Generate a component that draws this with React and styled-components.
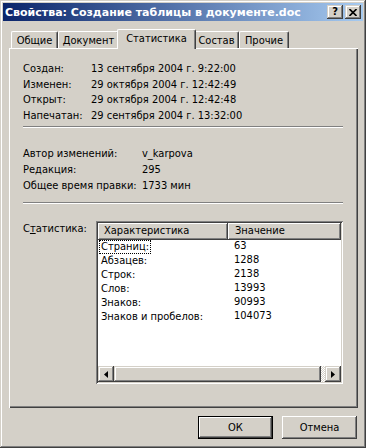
import React from 'react';
import styled, { createGlobalStyle } from 'styled-components';

const FACE = '#D4D0C8';
const SHADOW = '#808080';
const DARK = '#404040';

const GlobalStyle = createGlobalStyle`
  html, body {
    margin: 0;
    padding: 0;
    background: ${FACE};
  }
  body {
    font-family: "DejaVu Sans Condensed", "DejaVu Sans", Tahoma, sans-serif;
    font-stretch: condensed;
    font-size: 11px;
    color: #000;
  }
`;

const raised = `
  box-shadow: inset -1px -1px ${DARK}, inset 1px 1px ${FACE},
    inset -2px -2px ${SHADOW}, inset 2px 2px #fff;
`;

const Window = styled.div`
  width: 366px;
  height: 448px;
  box-sizing: border-box;
  padding: 3px;
  background: ${FACE};
  box-shadow: inset -1px -1px ${DARK}, inset 1px 1px ${FACE},
    inset -2px -2px ${SHADOW}, inset 2px 2px #fff;
  display: flex;
  flex-direction: column;
`;

const TitleBar = styled.div`
  height: 18px;
  display: flex;
  align-items: center;
  padding: 0 2px 0 2px;
  background: linear-gradient(to right, #0a246a, #a6caf0);
`;

const Title = styled.div`
  flex: 1;
  color: #fff;
  font-family: "DejaVu Sans", Tahoma, sans-serif;
  font-stretch: normal;
  font-weight: bold;
  font-size: 11px;
  white-space: nowrap;
  overflow: hidden;
`;

const CaptionButtons = styled.div`
  display: flex;
  gap: 2px;
`;

const CaptionButton = styled.div`
  width: 16px;
  height: 14px;
  background: ${FACE};
  ${raised}
  display: flex;
  align-items: center;
  justify-content: center;
  font-family: "DejaVu Sans", Tahoma, sans-serif;
  font-weight: bold;
  font-size: 11px;
  line-height: 14px;
`;

const Body = styled.div`
  flex: 1;
  display: flex;
  flex-direction: column;
  padding: 8px 5px 6px 6px;
`;

const TabRow = styled.div`
  height: 19px;
  display: flex;
  align-items: flex-end;
  padding-left: 2px;
`;

const Tab = styled.div`
  position: relative;
  box-sizing: border-box;
  width: ${p => p.$w + (p.$active ? 4 : 0)}px;
  height: ${p => (p.$active ? 20 : 17)}px;
  margin: 0 ${p => (p.$active ? -2 : 0)}px ${p => (p.$active ? -1 : 0)}px;
  z-index: ${p => (p.$active ? 2 : 1)};
  background: ${FACE};
  border-top: 1px solid #fff;
  border-left: 1px solid #fff;
  border-right: 1px solid ${DARK};
  border-top-left-radius: 2px;
  border-top-right-radius: 2px;
  box-shadow: inset -1px 0 ${SHADOW};
  display: flex;
  align-items: ${p => (p.$active ? 'flex-start' : 'center')};
  padding-top: ${p => (p.$active ? 2 : 0)}px;
  justify-content: center;
  white-space: nowrap;
`;

const Panel = styled.div`
  height: 360px;
  box-sizing: border-box;
  background: ${FACE};
  box-shadow: inset 1px 1px #fff, inset -1px -1px ${DARK},
    inset -2px -2px ${SHADOW};
  padding: 13px 15px 0 14px;
  display: flex;
  flex-direction: column;
`;

const InfoGrid = styled.div`
  display: grid;
  grid-template-columns: ${p => p.$label}px 1fr;
  line-height: 15.6px;
  white-space: nowrap;
  margin-top: ${p => p.$top || 0}px;
`;

const Separator = styled.div`
  height: 1px;
  background: ${SHADOW};
  border-bottom: 1px solid #fff;
  margin-top: ${p => p.$top}px;
`;

const StatsSection = styled.div`
  display: flex;
  margin-top: 17px;
`;

const StatsLabel = styled.div`
  width: 73px;
  line-height: 15.6px;
`;

const ListBox = styled.div`
  width: 247px;
  height: 163px;
  box-sizing: border-box;
  padding: 2px;
  background: #fff;
  box-shadow: inset 1px 1px ${SHADOW}, inset -1px -1px #fff,
    inset 2px 2px ${DARK}, inset -2px -2px ${FACE};
  display: flex;
  flex-direction: column;
`;

const HeaderRow = styled.div`
  display: flex;
  height: 17px;
`;

const HeaderCell = styled.div`
  box-sizing: border-box;
  width: ${p => (p.$w ? `${p.$w}px` : 'auto')};
  flex: ${p => (p.$w ? 'none' : 1)};
  background: ${FACE};
  box-shadow: inset -1px -1px ${DARK}, inset 1px 1px #fff,
    inset -2px -2px ${SHADOW};
  padding-left: ${p => p.$pad}px;
  line-height: 16px;
  white-space: nowrap;
  overflow: hidden;
`;

const Rows = styled.div`
  flex: 1;
`;

const Row = styled.div`
  display: flex;
  height: 14px;
  line-height: 12px;
`;

const NameCell = styled.div`
  width: 128px;
  padding-left: 1px;
  white-space: nowrap;
`;

const NameText = styled.span`
  display: inline-block;
  padding: 0 1px;
  border: 1px dotted ${p => (p.$focus ? '#000' : 'transparent')};
`;

const ValueCell = styled.div`
  padding-left: 7px;
`;

const ScrollBar = styled.div`
  height: 16px;
  display: flex;
`;

const ScrollButton = styled.div`
  width: 16px;
  height: 16px;
  background: ${FACE};
  ${raised}
  display: flex;
  align-items: center;
  justify-content: center;
`;

const Thumb = styled.div`
  flex: 1;
  background: ${FACE};
  ${raised}
`;

const Track = styled.div`
  width: 4px;
  background: repeating-conic-gradient(#fff 0 25%, ${FACE} 0 50%) 0 0 / 2px 2px;
`;

const ButtonRow = styled.div`
  display: flex;
  justify-content: flex-end;
  gap: 9px;
  margin-top: 8px;
  padding-right: 1px;
`;

const Button = styled.div`
  width: 75px;
  height: 23px;
  box-sizing: border-box;
  background: ${FACE};
  display: flex;
  align-items: center;
  justify-content: center;
  box-shadow: ${p =>
    p.$default
      ? `inset 0 0 0 1px #000, inset -2px -2px ${DARK}, inset 2px 2px #fff, inset -3px -3px ${SHADOW}`
      : `inset -1px -1px ${DARK}, inset 1px 1px #fff, inset -2px -2px ${SHADOW}`};
`;

const tabs = [
  { label: 'Общие', w: 47 },
  { label: 'Документ', w: 61 },
  { label: 'Статистика', w: 75, active: true },
  { label: 'Состав', w: 45 },
  { label: 'Прочие', w: 50 },
];

const dates = [
  ['Создан:', '13 сентября 2004 г. 9:22:00'],
  ['Изменен:', '29 октября 2004 г. 12:42:49'],
  ['Открыт:', '29 октября 2004 г. 12:42:48'],
  ['Напечатан:', '29 сентября 2004 г. 13:32:00'],
];

const edits = [
  ['Автор изменений:', 'v_karpova'],
  ['Редакция:', '295'],
  ['Общее время правки:', '1733 мин'],
];

const stats = [
  ['Страниц:', '63'],
  ['Абзацев:', '1288'],
  ['Строк:', '2138'],
  ['Слов:', '13993'],
  ['Знаков:', '90993'],
  ['Знаков и пробелов:', '104073'],
];

const Arrow = ({ dir }) => (
  <svg width="4" height="7" viewBox="0 0 4 7">
    {dir === 'left'
      ? <path d="M4 0 L0 3.5 L4 7 Z" fill="#000" />
      : <path d="M0 0 L4 3.5 L0 7 Z" fill="#000" />}
  </svg>
);

const CloseGlyph = () => (
  <svg width="8" height="7" viewBox="0 0 8 7">
    <path d="M0.5 0 L7.5 7 M7.5 0 L0.5 7" stroke="#000" strokeWidth="1.6" />
  </svg>
);

export default function App() {
  return (
    <>
      <GlobalStyle />
      <Window>
        <TitleBar>
          <Title>Свойства: Создание таблицы в документе.doc</Title>
          <CaptionButtons>
            <CaptionButton>?</CaptionButton>
            <CaptionButton><CloseGlyph /></CaptionButton>
          </CaptionButtons>
        </TitleBar>
        <Body>
          <TabRow>
            {tabs.map(t => (
              <Tab key={t.label} $w={t.w} $active={t.active}>{t.label}</Tab>
            ))}
          </TabRow>
          <Panel>
            <InfoGrid $label={68}>
              {dates.map(([k, v]) => (
                <React.Fragment key={k}>
                  <div>{k}</div>
                  <div>{v}</div>
                </React.Fragment>
              ))}
            </InfoGrid>
            <Separator $top={3} />
            <InfoGrid $label={119} $top={18}>
              {edits.map(([k, v]) => (
                <React.Fragment key={k}>
                  <div>{k}</div>
                  <div>{v}</div>
                </React.Fragment>
              ))}
            </InfoGrid>
            <Separator $top={9} />
            <StatsSection>
              <StatsLabel>С<u>т</u>атистика:</StatsLabel>
              <ListBox>
                <HeaderRow>
                  <HeaderCell $w={130} $pad={6}>Характеристика</HeaderCell>
                  <HeaderCell $pad={7}>Значение</HeaderCell>
                </HeaderRow>
                <Rows>
                  {stats.map(([k, v], i) => (
                    <Row key={k}>
                      <NameCell><NameText $focus={i === 0}>{k}</NameText></NameCell>
                      <ValueCell>{v}</ValueCell>
                    </Row>
                  ))}
                </Rows>
                <ScrollBar>
                  <ScrollButton><Arrow dir="left" /></ScrollButton>
                  <Thumb />
                  <Track />
                  <ScrollButton><Arrow dir="right" /></ScrollButton>
                </ScrollBar>
              </ListBox>
            </StatsSection>
          </Panel>
          <ButtonRow>
            <Button $default>ОК</Button>
            <Button>Отмена</Button>
          </ButtonRow>
        </Body>
      </Window>
    </>
  );
}
